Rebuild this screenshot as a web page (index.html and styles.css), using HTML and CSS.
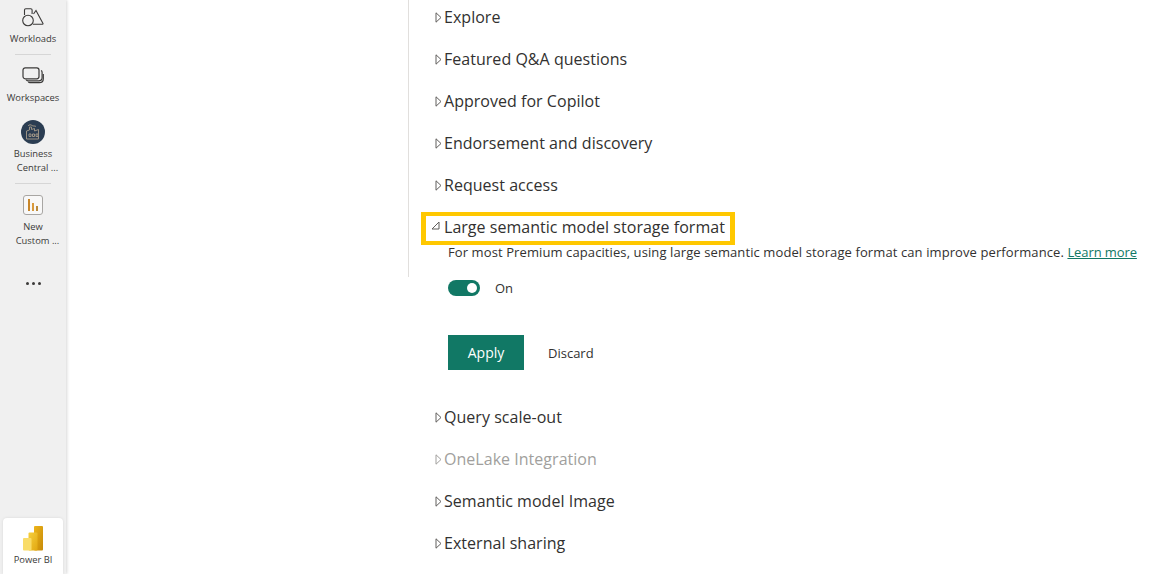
FILE: index.html
```html
<!DOCTYPE html>
<html lang="en">
<head>
<meta charset="utf-8">
<title>Semantic model settings</title>
<link rel="stylesheet" href="styles.css">
</head>
<body>
<svg class="defs" width="0" height="0"><defs>
  <symbol id="caret" viewBox="0 0 7 11"><path d="M1 .8 6 5.500 1 10.200z" fill="none" stroke="currentColor" stroke-width="1"/></symbol>
</defs></svg>
<nav class="rail">
  <a class="rail-item item-workloads">
    <svg class="icon" width="22" height="19" viewBox="0 0 22 19" fill="none" stroke="#3b3a39" stroke-width="1.1"><path d="M2.500 7V2c0-.8.500-1.300 1.300-1.300h5c.8 0 1.300.5 1.300 1.300v4"/><circle cx="6" cy="12.500" r="5.300"/><path d="M11.500 6 14 2.500 21 15.500a.5.5 0 0 1-.4.700H11"/></svg>
    <span class="label">Workloads</span>
  </a>
  <hr class="rule">
  <a class="rail-item item-workspaces">
    <svg class="icon" width="22" height="19" viewBox="0 0 22 19" fill="none" stroke="#3b3a39" stroke-width="1.2"><rect x="1" y=".8" width="16" height="11" rx="2.200"/><path d="M19 3.500c.8.300 1.100 1 1.100 1.800v5.200c0 2-1.300 3.300-3.300 3.300H6c-.8 0-1.500-.4-1.800-1"/><path d="M21.300 7v4.700c0 2.400-1.500 4-4 4H8c-.8 0-1.300-.3-1.700-.8"/></svg>
    <span class="label">Workspaces</span>
  </a>
  <a class="rail-item item-business">
    <span class="avatar">
      <svg width="18" height="18" viewBox="0 0 18 18" fill="none" stroke="#9a9284" stroke-width="1"><path d="M2.500 16V8l3-1V4h2v2.500l3-1V8l4-1.500V16z"/><path d="M5 11h2v2.500H5zM8.500 11h2v2.500h-2zM12 11h2v2.500h-2z"/><path d="M4 3c1-1.500 3-1.500 4-.5s3 0 4 1"/></svg>
    </span>
    <span class="label label-wrap">Business<br><span class="indent">Central ...</span></span>
  </a>
  <hr class="rule rule-second">
  <a class="rail-item item-custom">
    <span class="report">
      <svg width="12" height="14" viewBox="0 0 12 14"><rect x="1" y="1" width="2" height="12" fill="#c8862a"/><rect x="5" y="5" width="2" height="8" fill="#d99a3c"/><rect x="9" y="8" width="2" height="5" fill="#b98a3e"/></svg>
    </span>
    <span class="label label-wrap">New<br><span class="indent">Custom ...</span></span>
  </a>
  <span class="more"><i></i><i></i><i></i></span>
  <a class="app-tile">
    <svg width="20" height="25" viewBox="0 0 20 25"><defs><linearGradient id="g1" x1="0" x2="1" y1="0" y2="1"><stop offset="0" stop-color="#eeb51a"/><stop offset="1" stop-color="#c68a08"/></linearGradient><linearGradient id="g2" x1="0" x2="1" y1="0" y2="1"><stop offset="0" stop-color="#f6cf3d"/><stop offset="1" stop-color="#e2a811"/></linearGradient></defs><rect x="11" y="0" width="9" height="24.500" rx="1" fill="url(#g1)"/><rect x="5.500" y="6.500" width="9" height="18" rx="1" fill="url(#g2)"/><rect x="0" y="12" width="8.500" height="12.500" rx="1" fill="#f9dc68"/></svg>
    <span class="label">Power BI</span>
  </a>
</nav>
<main class="content">
  <section class="settings">
    <div class="upper">
      <div class="row"><svg class="caret"><use href="#caret"/></svg>Explore</div>
      <div class="row"><svg class="caret"><use href="#caret"/></svg>Featured Q&amp;A questions</div>
      <div class="row"><svg class="caret"><use href="#caret"/></svg>Approved for Copilot</div>
      <div class="row"><svg class="caret"><use href="#caret"/></svg>Endorsement and discovery</div>
      <div class="row"><svg class="caret"><use href="#caret"/></svg>Request access</div>
      <div class="row row-open"><svg class="open-arrow" width="9" height="9" viewBox="0 0 9 9" fill="none" stroke="#605e5c"><path d="M8 1V8H1z"/></svg>Large semantic model storage format</div>
      <p class="desc">For most Premium capacities, using large semantic model storage format can improve performance. <a class="link">Learn more</a></p>
    </div>
    <div class="lower">
      <div class="toggle-row"><span class="toggle"><span class="knob"></span></span><span>On</span></div>
      <div class="actions"><button class="btn-apply">Apply</button><button class="btn-discard">Discard</button></div>
      <div class="row"><svg class="caret"><use href="#caret"/></svg>Query scale-out</div>
      <div class="row row-disabled"><svg class="caret"><use href="#caret"/></svg>OneLake Integration</div>
      <div class="row"><svg class="caret"><use href="#caret"/></svg>Semantic model Image</div>
      <div class="row"><svg class="caret"><use href="#caret"/></svg>External sharing</div>
    </div>
  </section>
</main>
</body>
</html>
```
FILE: styles.css
```css
* { box-sizing: border-box; }
html, body { height: 100%; }
body {
  margin: 0;
  height: 574px;
  overflow: hidden;
  display: flex;
  background: #fff;
  color: #252423;
  font-family: "Open Sans", "Noto Sans", sans-serif;
}
.defs { position: absolute; }
.rail {
  width: 66px;
  flex: none;
  height: 100%;
  background: #f0f0f0;
  box-shadow: 1px 0 3px rgba(0, 0, 0, .16);
  display: flex;
  flex-direction: column;
  align-items: center;
}
.rail-item { display: flex; flex-direction: column; align-items: center; width: 100%; }
.item-workloads { padding-top: 8px; }
.item-workspaces { padding-top: 12px; }
.item-business { padding-top: 15px; }
.item-custom { padding-top: 11px; }
.label {
  font-size: 9.4px;
  line-height: 14px;
  color: #3b3a39;
  white-space: nowrap;
  text-align: center;
}
.label-wrap { margin-top: 3px; }
.item-custom .label-wrap { margin-top: 5px; }
.item-workloads .label { margin-top: 5px; }
.item-workspaces .label { margin-top: 5px; }
.indent { display: inline-block; padding-left: 9px; }
.rule { width: 36px; height: 1px; border: 0; background: #d6d6d6; margin: 8px 0 0; flex: none; }
.rule-second { margin-top: 8px; }
.avatar {
  width: 24px; height: 24px; border-radius: 50%;
  background: #2b3d52;
  display: flex; align-items: center; justify-content: center;
}
.report {
  width: 20px; height: 20px; border: 1px solid #a8a6a3; border-radius: 3px; background: #f8f8f8;
  display: flex; align-items: center; justify-content: center;
}
.more { margin-top: 28px; height: 14px; display: flex; align-items: center; gap: 3px; }
.more i { width: 3px; height: 3px; border-radius: 50%; background: #3b3a39; }
.app-tile {
  margin-top: auto;
  width: 60px; height: 56px;
  background: #fff;
  border-radius: 4px 4px 0 0;
  box-shadow: 0 0 3px rgba(0, 0, 0, .1);
  display: flex; flex-direction: column; align-items: center;
  padding-top: 8px;
}
.app-tile .label { margin-top: 2px; }
.content { flex: 1; padding-left: 342px; min-width: 0; }
.settings { width: 740px; }
.upper {
  border-left: 1px solid #e1dfdd;
  height: 277px;
  padding: 0 0 0 25px;
  display: flex; flex-direction: column; gap: 8px;
}
.row {
  height: 34px;
  display: flex; align-items: center;
  font-size: 16px;
  letter-spacing: .03px;
  white-space: nowrap;
  color: #323130;
}
.caret { width: 7px; height: 11px; margin: 0 2px 0 1px; color: #605e5c; flex: none; }
.row-open {
  position: relative;
  width: 314px; height: 33px;
  margin: 2px 0 0 -13px;
  padding: 0 0 3px 18px;
  border: 5px solid #ffc800;
  border-width: 4px 5px;
}
.open-arrow { position: absolute; left: 5px; top: 5px; }
.row-disabled { color: #a19f9d; }
.row-disabled .caret { color: #a19f9d; }
.desc { margin: -10px 0 0 14px; font-size: 13px; line-height: 18px; color: #323130; white-space: nowrap; letter-spacing: .1px; }
.link { color: #117865; text-decoration: underline; letter-spacing: -.1px; }
.lower { padding-left: 40px; }
.toggle-row { display: flex; align-items: center; gap: 15px; height: 16px; margin-top: 3px; font-size: 13px; color: #323130; }
.toggle { width: 32px; height: 16px; border-radius: 8px; background: #117865; display: flex; align-items: center; justify-content: flex-end; padding-right: 3px; }
.knob { width: 10px; height: 10px; border-radius: 50%; background: #fff; }
.actions { display: flex; align-items: center; margin-top: 39px; }
.actions button { font-family: inherit; font-size: 13px; border: 0; cursor: pointer; padding: 0; }
.actions .btn-apply { width: 76px; height: 35px; background: #117865; color: #fff; font-size: 14px; }
.btn-discard { background: none; color: #323130; margin-left: 24px; }
.lower .row { margin-left: -14px; margin-bottom: 8px; }
.lower .actions + .row { margin-top: 30px; }
```
